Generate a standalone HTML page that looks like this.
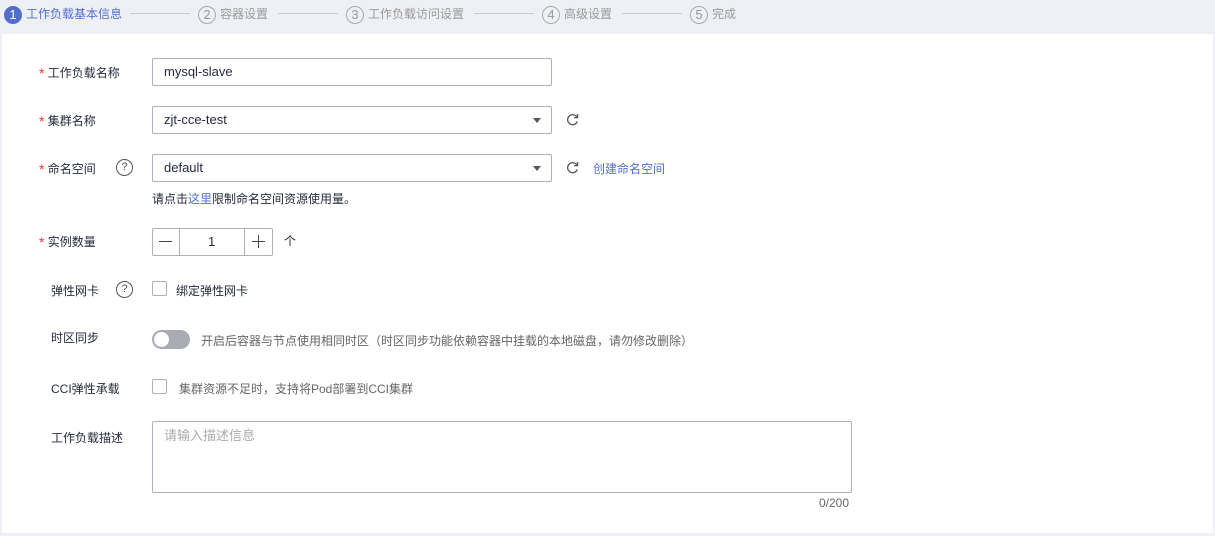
<!DOCTYPE html>
<html><head><meta charset="utf-8"><style>
*{box-sizing:border-box;margin:0;padding:0}
body{width:1215px;height:536px;background:#eef0f5;font-family:"Liberation Sans","Noto Sans CJK SC",sans-serif;font-size:12px;color:#252b3a;position:relative;overflow:hidden}
.a{position:absolute;white-space:nowrap}
.panel{position:absolute;left:2px;top:34px;width:1211px;height:499px;background:#fff}
.step{color:#999;font-size:12px;top:6px}
.num{display:inline-block;width:18px;height:18px;border:1px solid #aaa;border-radius:50%;text-align:center;line-height:16px;font-size:13px;color:#999;margin-right:4px;vertical-align:middle}
.line{position:absolute;top:13px;height:1px;background:#ccc}
.star{color:#e4393c;font-size:14px;position:relative;top:1px}
.inp{position:absolute;border:1px solid #adb0b8;border-radius:2px;background:#fff;padding-left:11px;line-height:26px;font-size:13px}
.arr{position:absolute;right:10px;top:11px;width:0;height:0;border-left:4px solid transparent;border-right:4px solid transparent;border-top:5px solid #555}
.q{position:absolute;width:17px;height:17px;border:1.3px solid #555;border-radius:50%;font-size:11px;text-align:center;line-height:15px;color:#555}
.cb{position:absolute;width:15px;height:15px;border:1px solid #adb0b8;border-radius:2px;background:#fff}
.link{color:#526ecc}
.gray{color:#666}
</style></head><body>
<div class="a step" style="left:4px;top:5px;color:#526ecc"><span class="num" style="background:#526ecc;border-color:#526ecc;color:#fff">1</span>工作负载基本信息</div>
<div class="line" style="left:130px;width:60px"></div>
<div class="a step" style="left:198px;top:5px"><span class="num">2</span>容器设置</div>
<div class="line" style="left:278px;width:60px"></div>
<div class="a step" style="left:346px;top:5px"><span class="num">3</span>工作负载访问设置</div>
<div class="line" style="left:474px;width:60px"></div>
<div class="a step" style="left:542px;top:5px"><span class="num">4</span>高级设置</div>
<div class="line" style="left:622px;width:60px"></div>
<div class="a step" style="left:690px;top:5px"><span class="num">5</span>完成</div>

<div class="panel"></div>

<div class="a" style="left:39px;top:64px"><span class="star">*</span> 工作负载名称</div>
<div class="inp" style="left:152px;top:58px;width:400px;height:28px">mysql-slave</div>

<div class="a" style="left:39px;top:112px"><span class="star">*</span> 集群名称</div>
<div class="inp" style="left:152px;top:106px;width:400px;height:28px">zjt-cce-test<div class="arr"></div></div>
<svg class="a" style="left:566px;top:113px" width="13" height="13" viewBox="0 0 13 13"><path d="M11 4.2A5 5 0 1 0 11.3 8.5" fill="none" stroke="#555" stroke-width="1.3"/><path d="M11.6 1v3.6H8" fill="none" stroke="#555" stroke-width="1.3"/></svg>

<div class="a" style="left:39px;top:160px"><span class="star">*</span> 命名空间</div>
<div class="q" style="left:116px;top:159px">?</div>
<div class="inp" style="left:152px;top:154px;width:400px;height:28px">default<div class="arr"></div></div>
<svg class="a" style="left:566px;top:161px" width="13" height="13" viewBox="0 0 13 13"><path d="M11 4.2A5 5 0 1 0 11.3 8.5" fill="none" stroke="#555" stroke-width="1.3"/><path d="M11.6 1v3.6H8" fill="none" stroke="#555" stroke-width="1.3"/></svg>
<div class="a link" style="left:593px;top:160px">创建命名空间</div>
<div class="a" style="left:152px;top:190px">请点击<span class="link">这里</span>限制命名空间资源使用量。</div>

<div class="a" style="left:39px;top:233px"><span class="star">*</span> 实例数量</div>
<div class="inp" style="left:152px;top:228px;width:121px;height:28px;padding:0"></div>
<div class="a" style="left:179px;top:229px;width:1px;height:26px;background:#adb0b8"></div>
<div class="a" style="left:244px;top:229px;width:1px;height:26px;background:#adb0b8"></div>
<div class="a" style="left:159px;top:241px;width:13px;height:1px;background:#444"></div>
<div class="a" style="left:252px;top:241px;width:13px;height:1px;background:#444"></div>
<div class="a" style="left:258px;top:235px;width:1px;height:13px;background:#444"></div>
<div class="a" style="left:208px;top:234px;font-size:13px">1</div>
<div class="a" style="left:284px;top:232px">个</div>

<div class="a" style="left:51px;top:282px">弹性网卡</div>
<div class="q" style="left:116px;top:281px">?</div>
<div class="cb" style="left:152px;top:281px"></div>
<div class="a" style="left:176px;top:282px">绑定弹性网卡</div>

<div class="a" style="left:51px;top:329px">时区同步</div>
<div class="a" style="left:152px;top:330px;width:38px;height:19px;border-radius:10px;background:#a9abb2"></div>
<div class="a" style="left:154px;top:332px;width:15px;height:15px;border-radius:50%;background:#fff"></div>
<div class="a gray" style="left:201px;top:332px">开启后容器与节点使用相同时区（时区同步功能依赖容器中挂载的本地磁盘，请勿修改删除）</div>

<div class="a" style="left:51px;top:380px">CCI弹性承载</div>
<div class="cb" style="left:152px;top:379px"></div>
<div class="a gray" style="left:179px;top:380px">集群资源不足时，支持将Pod部署到CCI集群</div>

<div class="a" style="left:51px;top:429px">工作负载描述</div>
<div class="inp" style="left:152px;top:421px;width:700px;height:72px;color:#aaa;line-height:28px">请输入描述信息</div>
<div class="a gray" style="left:819px;top:496px">0/200</div>
</body></html>
